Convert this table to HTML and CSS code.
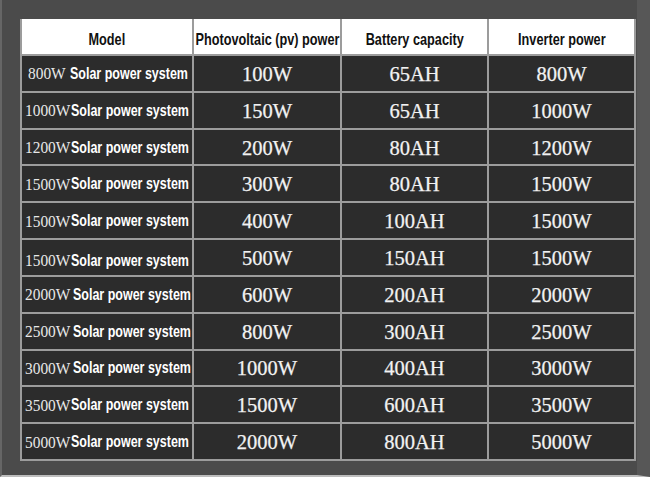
FILE: index.html
```html
<!DOCTYPE html>
<html>
<head>
<meta charset="utf-8">
<link rel="stylesheet" href="styles.css">
</head>
<body>
<div class="frame">
  <div class="table">
    <div class="cell head"><span class="hx">Model</span></div>
    <div class="cell head"><span class="hx">Photovoltaic (pv) power</span></div>
    <div class="cell head"><span class="hx">Battery capacity</span></div>
    <div class="cell head"><span class="hx">Inverter power</span></div>

    <div class="cell model first"><span class="w">800W</span><span class="sys wide">Solar power system</span></div>
    <div class="cell val">100W</div><div class="cell val">65AH</div><div class="cell val">800W</div>

    <div class="cell model"><span class="w">1000W</span><span class="sys">Solar power system</span></div>
    <div class="cell val">150W</div><div class="cell val">65AH</div><div class="cell val">1000W</div>

    <div class="cell model"><span class="w">1200W</span><span class="sys">Solar power system</span></div>
    <div class="cell val">200W</div><div class="cell val">80AH</div><div class="cell val">1200W</div>

    <div class="cell model"><span class="w">1500W</span><span class="sys">Solar power system</span></div>
    <div class="cell val">300W</div><div class="cell val">80AH</div><div class="cell val">1500W</div>

    <div class="cell model"><span class="w">1500W</span><span class="sys">Solar power system</span></div>
    <div class="cell val">400W</div><div class="cell val">100AH</div><div class="cell val">1500W</div>

    <div class="cell model low"><span class="w">1500W</span><span class="sys">Solar power system</span></div>
    <div class="cell val">500W</div><div class="cell val">150AH</div><div class="cell val">1500W</div>

    <div class="cell model"><span class="w">2000W</span><span class="sys gap">Solar power system</span></div>
    <div class="cell val">600W</div><div class="cell val">200AH</div><div class="cell val">2000W</div>

    <div class="cell model"><span class="w">2500W</span><span class="sys gap">Solar power system</span></div>
    <div class="cell val">800W</div><div class="cell val">300AH</div><div class="cell val">2500W</div>

    <div class="cell model"><span class="w">3000W</span><span class="sys gap">Solar power system</span></div>
    <div class="cell val">1000W</div><div class="cell val">400AH</div><div class="cell val">3000W</div>

    <div class="cell model"><span class="w">3500W</span><span class="sys">Solar power system</span></div>
    <div class="cell val">1500W</div><div class="cell val">600AH</div><div class="cell val">3500W</div>

    <div class="cell model"><span class="w">5000W</span><span class="sys">Solar power system</span></div>
    <div class="cell val">2000W</div><div class="cell val">800AH</div><div class="cell val">5000W</div>
  </div>
</div>
</body>
</html>
```
FILE: styles.css
```css
html, body {
  margin: 0;
  padding: 0;
}
body {
  width: 650px;
  height: 477px;
  overflow: hidden;
  background: #4b4b4b;
}
.frame {
  box-sizing: border-box;
  width: 650px;
  height: 477px;
  padding: 19px 0 0 18px;
  border-left: 2px solid #666666;
  border-right: 13px solid #575757;
  border-bottom: 2px solid #bdbdbd;
  background: #4b4b4b;
}
.table {
  display: grid;
  grid-template-columns: 170px 146px 145px 145px;
  grid-template-rows: 35px repeat(11, 1fr);
  gap: 2px;
  padding: 0 2px 2px 2px;
  width: max-content;
  height: 442px;
  box-sizing: border-box;
  background: #9c9c9c;
}
.cell {
  display: flex;
  align-items: center;
  justify-content: center;
  background: #2c2c2c;
  color: #f2f2f2;
  white-space: nowrap;
  min-width: 0;
}
.head {
  background: #ffffff;
  color: #111111;
  font-family: "Liberation Sans", Arial, sans-serif;
  font-weight: 700;
  font-size: 16.5px;
  padding-top: 5px;
  box-sizing: border-box;
}
.hx {
  display: inline-block;
  flex: none;
  transform: scaleX(0.77);
  transform-origin: center center;
}
.val {
  font-family: "Liberation Serif", "Times New Roman", serif;
  font-size: 20.5px;
  padding-top: 2px;
  box-sizing: border-box;
  -webkit-text-stroke: 0.25px #f2f2f2;
}
.model {
  justify-content: flex-start;
  padding-left: 3px;
  padding-top: 1px;
  box-sizing: border-box;
}
.model.first {
  padding-left: 6px;
}
.model.low {
  padding-top: 7px;
}
.w {
  display: inline-block;
  flex: none;
  font-family: "Liberation Serif", "Times New Roman", serif;
  font-size: 17.5px;
  color: #e8e8e8;
  transform: scaleX(0.88);
  transform-origin: left center;
  margin-right: -0.33em;
}
.sys {
  display: inline-block;
  flex: none;
  font-family: "Liberation Sans", Arial, sans-serif;
  font-weight: 700;
  font-size: 16px;
  color: #ffffff;
  transform: scaleX(0.78);
  transform-origin: left center;
}
.sys.gap {
  margin-left: 2px;
}
.sys.wide {
  margin-left: 5px;
}
```
